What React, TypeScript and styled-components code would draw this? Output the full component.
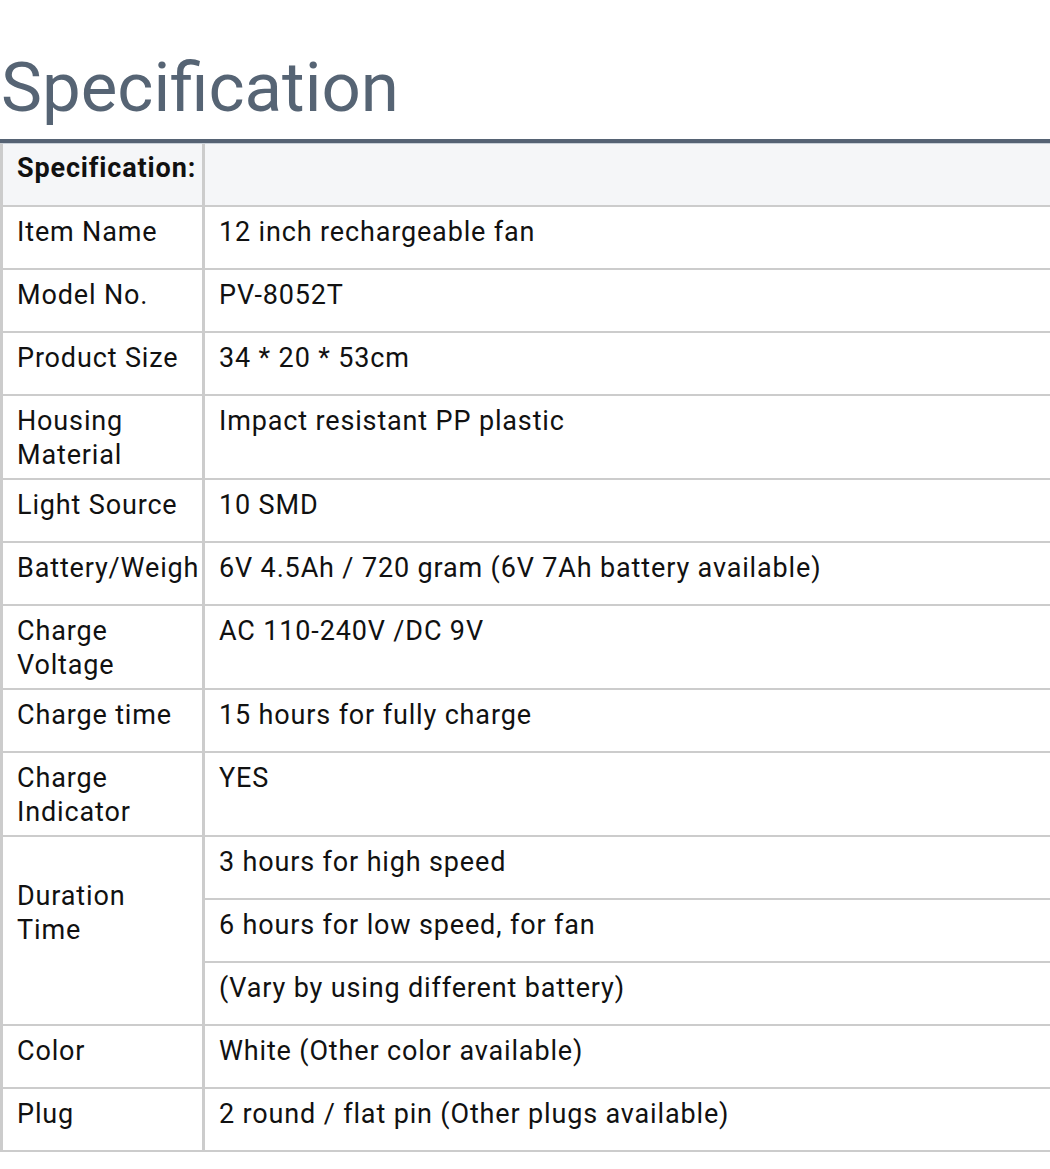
import React from "react";
import styled, { createGlobalStyle } from "styled-components";

const GlobalStyle = createGlobalStyle`
  html, body {
    margin: 0;
    padding: 0;
    background: #ffffff;
  }
  body {
    font-family: Roboto, "Liberation Sans", Arial, sans-serif;
    color: #111111;
    overflow: hidden;
  }
`;

const Page = styled.div`
  width: 1050px;
  overflow: hidden;
`;

const Title = styled.h1`
  margin: 48px 0 0;
  padding: 0 0 11px 1px;
  font-family: Roboto, "Liberation Sans", Arial, sans-serif;
  font-weight: 400;
  font-size: 69px;
  line-height: 80px;
  color: #566474;
  border-bottom: 4px solid #566374;
`;

const Table = styled.div`
  display: grid;
  grid-template-columns: 202px 1fr;
  width: 1070px;
  border-left: 3px solid #cccccc;
  border-top: 1px solid #c9d0d8;
`;

const Cell = styled.div<{ $head?: boolean; $label?: boolean; $span?: number; $padTop?: number }>`
  box-sizing: border-box;
  min-height: 63px;
  padding: ${(p) => p.$padTop ?? 8}px 8px 6px 14px;
  font-size: 27px;
  letter-spacing: 0.85px;
  line-height: 34px;
  font-weight: ${(p) => (p.$head ? 700 : 400)};
  background: ${(p) => (p.$head ? "#f5f6f8" : "#ffffff")};
  border-bottom: 2px solid #cccccc;
  border-right: ${(p) => (p.$label ? "3px solid #cccccc" : "none")};
  white-space: nowrap;
  overflow: hidden;
  ${(p) => (p.$span ? `grid-row: span ${p.$span};` : "")}
`;

const Label = styled(Cell).attrs({ $label: true })``;

type Row = { label: string; value: string | string[] };

const rows: Row[] = [
  { label: "Item Name", value: "12 inch rechargeable fan" },
  { label: "Model No.", value: "PV-8052T" },
  { label: "Product Size", value: "34 * 20 * 53cm" },
  { label: "Housing\nMaterial", value: "Impact resistant PP plastic" },
  { label: "Light Source", value: "10 SMD" },
  { label: "Battery/Weigh", value: "6V 4.5Ah / 720 gram (6V 7Ah battery available)" },
  { label: "Charge\nVoltage", value: "AC 110-240V /DC 9V" },
  { label: "Charge time", value: "15 hours for fully charge" },
  { label: "Charge\nIndicator", value: "YES" },
  {
    label: "Duration\nTime",
    value: ["3 hours for high speed", "6 hours for low speed, for fan", "(Vary by using different battery)"],
  },
  { label: "Color", value: "White (Other color available)" },
  { label: "Plug", value: "2 round / flat pin (Other plugs available)" },
];

const Lines: React.FC<{ text: string }> = ({ text }) => (
  <>
    {text.split("\n").map((t, i) => (
      <div key={i}>{t}</div>
    ))}
  </>
);

export default function App() {
  return (
    <Page>
      <GlobalStyle />
      <Title>Specification</Title>
      <Table>
        <Label $head $padTop={7}>Specification:</Label>
        <Cell $head />
        {rows.map((r) =>
          Array.isArray(r.value) ? (
            <React.Fragment key={r.label}>
              <Label $span={r.value.length} $padTop={42}>
                <Lines text={r.label} />
              </Label>
              {r.value.map((v) => (
                <Cell key={v}>{v}</Cell>
              ))}
            </React.Fragment>
          ) : (
            <React.Fragment key={r.label}>
              <Label>
                <Lines text={r.label} />
              </Label>
              <Cell>{r.value}</Cell>
            </React.Fragment>
          )
        )}
      </Table>
    </Page>
  );
}
